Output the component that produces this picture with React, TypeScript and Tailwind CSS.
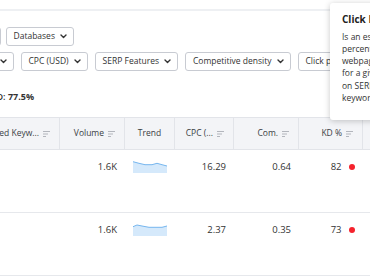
import React from "react";

const Chevron = () => (
    <svg width="7" height="5" viewBox="0 0 7 5" className="shrink-0">
        <path d="M1 1l2.5 2.5L6 1" fill="none" stroke="#333" strokeWidth="1.4" strokeLinecap="round" strokeLinejoin="round" />
    </svg>
);

const SortIcon = () => (
    <svg width="7" height="6" viewBox="0 0 7 6" className="shrink-0">
        <path d="M0 0.5h7M0 3h5M0 5.5h3" stroke="#b3b6bd" strokeWidth="1" />
    </svg>
);

type FilterProps = { label: string; className?: string };

function Filter({ label, className = "" }: FilterProps) {
    return (
        <button
            type="button"
            className={`flex h-[19px] shrink-0 items-center justify-end gap-[5px] whitespace-nowrap rounded-[3px] border border-[#c8cbd2] bg-white px-[6.5px] text-[8.5px] text-[#333] ${className}`}
        >
            {label}
            <Chevron />
        </button>
    );
}

function Spark({ line }: { line: string }) {
    return (
        <svg width="34" height="12" viewBox="0 0 34 12">
            <path d={`${line} L34 12 L0 12 Z`} fill="#d5e9fb" />
            <path d={line} fill="none" stroke="#76b6ee" strokeWidth="1" />
        </svg>
    );
}

const cols = "grid grid-cols-[160px_65px_50px_59px_65px_64px_120px] -ml-[100px]";

function HeadCell({ label, center = false }: { label: string; center?: boolean }) {
    return (
        <div
            className={`flex items-center gap-[4px] whitespace-nowrap border-r border-[#e2e4e9] pr-[9px] text-[8.5px] text-[#3a3d44] ${center ? "justify-center pl-[9px]" : "justify-end"}`}
        >
            {label}
            {!center && <SortIcon />}
        </div>
    );
}

type Row = { volume: string; trend: string; cpc: string; com: string; kd: string };

const rows: Row[] = [
    { volume: "1.6K", trend: "M0 0.7 L6 2.3 L12 3.7 L19 3.7 L24 2.3 L29 3.7 L34 5", cpc: "16.29", com: "0.64", kd: "82" },
    { volume: "1.6K", trend: "M0 2.7 L4 1 L9 2 L16 3.3 L29 3.3 L34 2", cpc: "2.37", com: "0.35", kd: "73" },
];

function Value({ children }: { children: React.ReactNode }) {
    return <div className="flex justify-end pr-[8px] pt-[11px] text-[9.5px] leading-[12px]">{children}</div>;
}

export default function App() {
    return (
        <div
            className="relative h-[277px] w-[370px] overflow-hidden bg-white text-[#333]"
            style={{ fontFamily: "'Open Sans', 'Noto Sans', sans-serif" }}
        >
            <div className="h-[11px] border-b-2 border-[#eef0f3]" />

            {/* Filters */}
            <div className="mt-[16px] flex gap-[5px]">
                <Filter label="Languages" className="-ml-[70px] w-[71px]" />
                <Filter label="Databases" />
            </div>
            <div className="mt-[6px] flex gap-[7px]">
                <Filter label="Intent" className="-ml-[50px] w-[64px]" />
                <Filter label="CPC (USD)" />
                <Filter label="SERP Features" />
                <Filter label="Competitive density" />
                <Filter label="Click potential" />
            </div>

            {/* Summary */}
            <div className="mt-[20px] flex h-[12px] w-[34px] justify-end whitespace-nowrap text-[9px] leading-[12px]">
                <span className="font-semibold">Average KD:&nbsp;</span>
                <span className="font-bold">77.5%</span>
            </div>

            {/* Table */}
            <div className="mt-[14px]">
                <div className={`${cols} h-[33px] border-y border-[#e2e4e9] bg-[#f3f4f7]`}>
                    <HeadCell label="Related Keyw..." />
                    <HeadCell label="Volume" />
                    <HeadCell label="Trend" center />
                    <HeadCell label="CPC (..." />
                    <HeadCell label="Com." />
                    <HeadCell label="KD %" />
                    <div />
                </div>
                {rows.map((r, i) => (
                    <div key={i} className={`${cols} h-[63px] border-b border-[#e6e8ec]`}>
                        <div />
                        <Value>{r.volume}</Value>
                        <div className="flex justify-center pt-[11px]">
                            <Spark line={r.trend} />
                        </div>
                        <Value>{r.cpc}</Value>
                        <Value>{r.com}</Value>
                        <div className="flex items-center justify-end gap-[7px] self-start pr-[8.5px] pt-[11px] text-[9.5px] leading-[12px]">
                            {r.kd}
                            <span className="h-[6px] w-[6px] rounded-full bg-[#f5222d]" />
                        </div>
                        <div />
                    </div>
                ))}
            </div>

            {/* Tooltip */}
            <div className="absolute left-[330px] top-[3px] h-[117px] w-[190px] rounded-[3px] bg-white pl-[12px] pt-[10px] shadow-[0_1px_6px_rgba(0,0,0,0.22)]">
                <div className="text-[10px] font-bold leading-[13px] text-[#222]">Click Potential</div>
                <div className="mt-[4.5px] whitespace-nowrap text-[8.5px] leading-[12.3px] text-[#333]">
                    <div>Is an estimated</div>
                    <div>percentile of clicks a</div>
                    <div>webpage can receive</div>
                    <div>for a given keyword</div>
                    <div>on SERP for this</div>
                    <div>keyword.</div>
                </div>
            </div>
        </div>
    );
}
